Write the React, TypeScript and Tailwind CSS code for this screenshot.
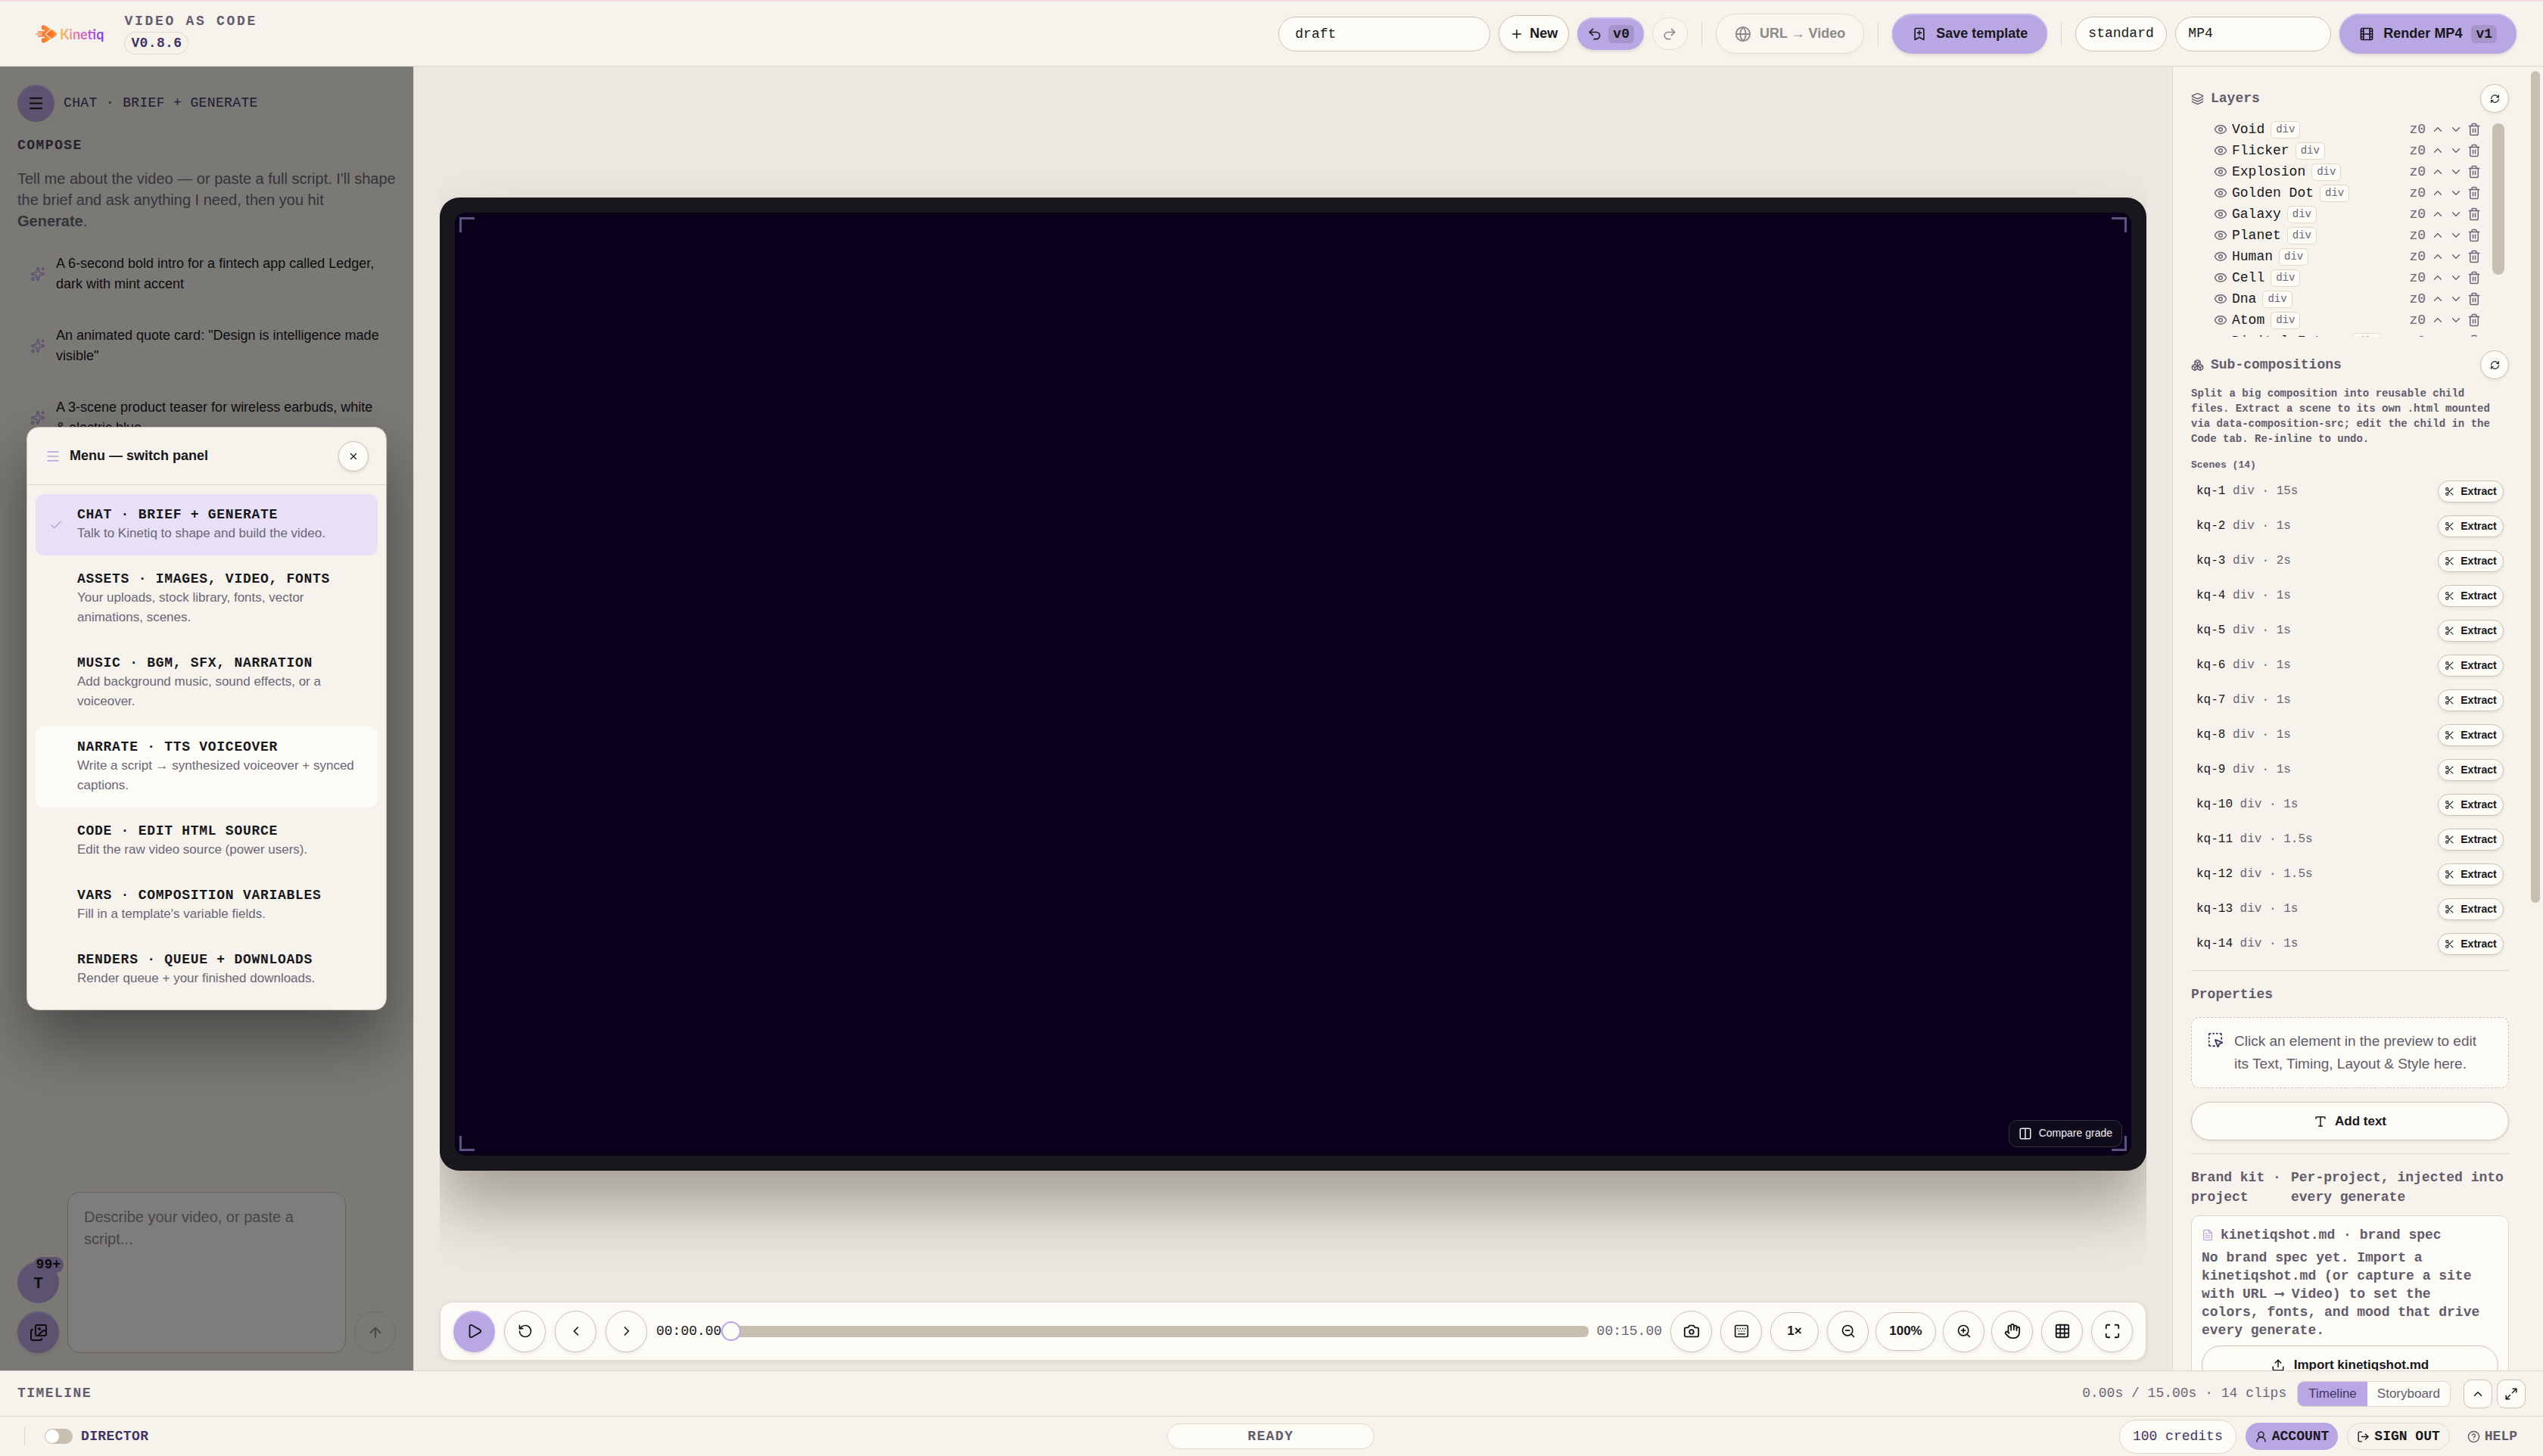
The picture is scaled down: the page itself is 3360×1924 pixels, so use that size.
import { useState } from "react";
import type { ReactNode } from "react";
import {
  ArrowUp,
  BookmarkPlus,
  Boxes,
  Camera,
  Check,
  ChevronDown,
  ChevronLeft,
  ChevronRight,
  ChevronUp,
  CircleQuestionMark,
  Columns2,
  Eye,
  FileText,
  Film,
  Globe,
  Grid3x3,
  Hand,
  Images,
  Layers,
  LogOut,
  Maximize,
  Maximize2,
  Menu,
  Play,
  Plus,
  Redo2,
  RefreshCw,
  RotateCcw,
  Scissors,
  Sparkles,
  SquareDashedMousePointer,
  Trash2,
  Type,
  Undo2,
  Upload,
  UserRound,
  X,
  ZoomIn,
  ZoomOut,
} from "lucide-react";

const MONO = "font-['Liberation_Mono',monospace]";

const IDEAS = [
  "A 6-second bold intro for a fintech app called Ledger, dark with mint accent",
  'An animated quote card: "Design is intelligence made visible"',
  "A 3-scene product teaser for wireless earbuds, white & electric blue",
];

const PANELS = [
  { title: "CHAT · BRIEF + GENERATE", text: "Talk to Kinetiq to shape and build the video." },
  { title: "ASSETS · IMAGES, VIDEO, FONTS", text: "Your uploads, stock library, fonts, vector animations, scenes." },
  { title: "MUSIC · BGM, SFX, NARRATION", text: "Add background music, sound effects, or a voiceover." },
  { title: "NARRATE · TTS VOICEOVER", text: "Write a script → synthesized voiceover + synced captions." },
  { title: "CODE · EDIT HTML SOURCE", text: "Edit the raw video source (power users)." },
  { title: "VARS · COMPOSITION VARIABLES", text: "Fill in a template's variable fields." },
  { title: "RENDERS · QUEUE + DOWNLOADS", text: "Render queue + your finished downloads." },
];

const LAYERS = [
  "Void",
  "Flicker",
  "Explosion",
  "Golden Dot",
  "Galaxy",
  "Planet",
  "Human",
  "Cell",
  "Dna",
  "Atom",
  "Digital Future",
];

const SCENES = ["15s", "1s", "2s", "1s", "1s", "1s", "1s", "1s", "1s", "1s", "1.5s", "1.5s", "1s", "1s"];

function Logo() {
  return (
    <a href="#" className="flex items-center gap-1">
      <svg width="28" height="24" viewBox="0 0 28 24">
        <defs>
          <linearGradient id="mark" x1="0" y1="0" x2="1" y2="0">
            <stop offset="0" stopColor="#ff5a2c" />
            <stop offset="0.55" stopColor="#fb7a2c" />
            <stop offset="1" stopColor="#fba52c" />
          </linearGradient>
        </defs>
        <g fill="url(#mark)">
          <path d="M8 2.5Q8 0 10.500 0.300Q16 2 20 5.500L12.500 12L20 18.500Q16 22 10.500 23.700Q8 24 8 21.500L8 18L12 17L12 15.500L3 15.500L3 14L9 13.800L9 12.800L0 12.600L0 11.400L9 11.200L9 10.200L3 10L3 8.500L12 8.500L12 7L8 6Z" />
          <path d="M14 12L20.500 6.500Q21.500 5.800 22.500 6.500L28 11Q28.600 12 28 13L22.500 17.500Q21.500 18.200 20.500 17.500Z" />
        </g>
      </svg>
      <span className="bg-gradient-to-r from-[#fbb92c] via-[#e05fc0] to-[#7b35f5] bg-clip-text font-[Lato,sans-serif] text-[18px] leading-6 font-bold text-transparent">
        Kinetiq
      </span>
    </a>
  );
}

function KeyboardIcon() {
  return (
    <svg width="20" height="20" viewBox="0 0 24 24" fill="none" stroke="currentColor" strokeWidth="2" strokeLinecap="round">
      <rect x="2" y="3" width="20" height="18" rx="2" />
      <path d="M6 8h.01M10 8h.01M14 8h.01M18 8h.01M8 12h.01M12 12h.01M16 12h.01M7 16.500h10" />
    </svg>
  );
}

function Divider() {
  return (
    <div className="px-[7px]">
      <div className="h-8 w-px bg-[#dcd6ca]" />
    </div>
  );
}

function RoundButton({ label, children, accent }: { label: string; children: ReactNode; accent?: boolean }) {
  return (
    <button
      aria-label={label}
      className={
        accent
          ? "flex size-[55px] shrink-0 items-center justify-center rounded-full bg-[#b9a7e3] shadow-[inset_0_2px_0_#cbbdee,0_2px_4px_rgba(24,23,27,0.12)]"
          : "flex size-[55px] shrink-0 items-center justify-center rounded-full border border-[#cbc3b4] bg-[#fcfbf6] shadow-[0_2px_4px_rgba(24,23,27,0.08)]"
      }
    >
      {children}
    </button>
  );
}

function RefreshButton({ label }: { label: string }) {
  return (
    <button
      aria-label={label}
      className="flex size-[38px] items-center justify-center rounded-full border border-[#cbc3b4] bg-[#fcfbf6] shadow-[0_2px_4px_rgba(24,23,27,0.08)]"
    >
      <RefreshCw size={13} />
    </button>
  );
}

function Header() {
  return (
    <header className="flex h-[88px] shrink-0 items-center justify-between border-t-2 border-b border-t-[#f3dee2] border-b-[#dcd6ca] pr-[35px] pl-[47px]">
      <div className="flex items-center gap-[27px]">
        <Logo />
        <div className={`${MONO} flex flex-col items-start gap-1 text-[18px] font-bold`}>
          <span className="leading-5 tracking-[0.15em] text-[#625b6b]">VIDEO AS CODE</span>
          <span className="rounded-full border border-[#e2d9ca] px-2 leading-7 tracking-[0.02em] text-[#3f3566]">
            V0.8.6
          </span>
        </div>
      </div>

      <div className="flex items-center gap-[11px] text-[18px] font-bold">
        <input
          aria-label="Project name"
          defaultValue="draft"
          className={`${MONO} h-[46px] w-[280px] rounded-full border border-[#cbc3b4] bg-[#fcfbf6] px-[21px] font-normal outline-none`}
        />
        <button className="flex h-[49px] items-center gap-2 rounded-full border border-[#cbc3b4] bg-[#fcfbf6] px-[14px] shadow-[0_2px_4px_rgba(24,23,27,0.08)]">
          <Plus size={18} />
          New
        </button>
        <button
          aria-label="Undo"
          className="flex h-[43px] items-center gap-2 rounded-full bg-[#b9a7e3] px-[13px] shadow-[inset_0_2px_0_#cbbdee,0_2px_4px_rgba(24,23,27,0.12)]"
        >
          <Undo2 size={20} />
          <span className={`${MONO} rounded-md bg-[#a595ca] px-[6px] leading-6`}>v0</span>
        </button>
        <button
          aria-label="Redo"
          className="flex h-[43px] w-[47px] items-center justify-center rounded-full border border-[#e2ddd2] bg-[#f9f6f0] text-[#8b8a89]"
        >
          <Redo2 size={20} />
        </button>
        <Divider />
        <button className="flex h-[53px] items-center gap-[11px] rounded-full border border-[#e2ddd2] bg-[#f9f6f0] px-6 text-[#8b8a89] shadow-[0_2px_4px_rgba(24,23,27,0.04)]">
          <Globe size={22} />
          URL → Video
        </button>
        <Divider />
        <button className="flex h-[53px] items-center gap-3 rounded-full bg-[#b9a7e3] px-[26px] shadow-[inset_0_2px_0_#cbbdee,0_2px_4px_rgba(24,23,27,0.12)]">
          <BookmarkPlus size={20} />
          Save template
        </button>
        <Divider />
        <select
          aria-label="Quality"
          className={`${MONO} h-[46px] w-[121px] appearance-none rounded-full border border-[#cbc3b4] bg-[#fcfbf6] px-4 font-normal outline-none`}
        >
          <option>standard</option>
        </select>
        <select
          aria-label="Format"
          className={`${MONO} h-[46px] w-[206px] appearance-none rounded-full border border-[#cbc3b4] bg-[#fcfbf6] px-4 font-normal outline-none`}
        >
          <option>MP4</option>
        </select>
        <button className="flex h-[53px] items-center gap-3 rounded-full bg-[#b9a7e3] px-[26px] shadow-[inset_0_2px_0_#cbbdee,0_2px_4px_rgba(24,23,27,0.12)]">
          <Film size={20} />
          Render MP4
          <span className={`${MONO} rounded-md bg-[#a595ca] px-[6px] leading-6`}>v1</span>
        </button>
      </div>
    </header>
  );
}

function PanelMenu() {
  const [active, setActive] = useState(0);

  return (
    <div className="absolute inset-0 flex items-center justify-center bg-black/50 px-[35px]">
      <div
        role="dialog"
        aria-label="Menu"
        className="w-full rounded-[16px] border border-[#cbc3b4] bg-[#f6f3ec] shadow-[0_40px_80px_rgba(0,0,0,0.4)]"
      >
        <div className="flex h-[76px] items-center border-b border-[#dcd6ca] pr-[23px] pl-6">
          <Menu size={20} className="text-[#b9a7e3]" />
          <h2 className="ml-3 flex-1 text-[18px] font-bold">Menu — switch panel</h2>
          <button
            aria-label="Close"
            className="flex size-10 items-center justify-center rounded-full border border-[#cbc3b4] bg-[#fcfbf6] shadow-[0_2px_4px_rgba(24,23,27,0.1)]"
          >
            <X size={14} />
          </button>
        </div>
        <div className="flex flex-col gap-1 px-[11px] py-3">
          {PANELS.map((p, i) => (
            <button
              key={p.title}
              onClick={() => setActive(i)}
              className={`flex items-center rounded-[11px] py-4 pr-5 pl-[18px] text-left ${
                i === active ? "bg-[#e8e0f6]" : i === 3 ? "bg-[#fcfbf6]" : ""
              }`}
            >
              <span className="w-[37px] shrink-0">
                {i === active && <Check size={18} className="text-[#b9a7e3]" />}
              </span>
              <span className="flex-1">
                <span className={`${MONO} block text-[18px] leading-[23px] font-bold tracking-[0.04em]`}>
                  {p.title}
                </span>
                <span className="block text-[17px] leading-[26px] text-[#6b6676]">{p.text}</span>
              </span>
            </button>
          ))}
        </div>
      </div>
    </div>
  );
}

function ChatPanel() {
  return (
    <aside className="relative flex w-[547px] shrink-0 flex-col overflow-hidden border-r border-[#dcd6ca]">
      <div className="flex items-center gap-3 px-[23px] pt-6">
        <button
          aria-label="Menu"
          className="flex size-[49px] items-center justify-center rounded-full bg-[#b9a7e3] shadow-[inset_0_2px_0_#cbbdee]"
        >
          <Menu size={23} />
        </button>
        <span className={`${MONO} text-[18px] tracking-[0.02em] text-[#3f3566]`}>CHAT · BRIEF + GENERATE</span>
      </div>
      <h2 className={`${MONO} mt-[19px] px-[23px] text-[18px] leading-6 font-bold tracking-[0.08em] text-[#4b4457]`}>
        COMPOSE
      </h2>
      <p className="mt-[18px] px-[23px] text-[20px] leading-[28px] text-[#6b6676]">
        Tell me about the video — or paste a full script. I'll shape the brief and ask anything I need, then you hit{" "}
        <strong>Generate</strong>.
      </p>
      <div className="mt-[9px] flex flex-col gap-px px-[23px]">
        {IDEAS.map((idea) => (
          <button key={idea} className="flex items-center gap-[14px] py-5 pr-5 pl-[17px] text-left">
            <Sparkles size={20} className="shrink-0 text-[#b9a7e3]" />
            <span className="text-[18px] leading-[27px]">{idea}</span>
          </button>
        ))}
      </div>

      <div className="mt-auto flex items-end gap-[11px] px-[23px] pb-[23px]">
        <div className="flex flex-col gap-[11px]">
          <button
            aria-label="Assets, 99+"
            className={`${MONO} relative flex size-[55px] items-center justify-center rounded-full bg-[#b9a7e3] text-[20px] font-bold shadow-[inset_0_2px_0_#cbbdee]`}
          >
            <span className="font-['Liberation_Sans',sans-serif]">T</span>
            <span className="absolute -top-[6px] -right-[6px] rounded-full bg-[#b9a7e3] px-1 text-[18px] leading-[21px]">
              99+
            </span>
          </button>
          <RoundButton label="Add images" accent>
            <Images size={24} />
          </RoundButton>
        </div>
        <textarea
          aria-label="Describe your video"
          placeholder="Describe your video, or paste a script..."
          className="h-[213px] min-w-0 flex-1 resize-none rounded-[17px] border border-[#cbc3b4] bg-[#fcfbf6] px-[21px] py-[18px] text-[20px] leading-[29px] outline-none placeholder:text-[#8f8b93]"
        />
        <button
          aria-label="Send"
          className="flex size-[55px] items-center justify-center rounded-full border border-[#dcd6ca] text-[#8f8b93]"
        >
          <ArrowUp size={22} />
        </button>
      </div>
      <PanelMenu />
    </aside>
  );
}

function Stage() {
  return (
    <main className="flex min-w-0 flex-1 flex-col bg-[#ece7e0] px-[34px] pb-[13px]">
      <div className="flex min-h-0 flex-1 items-center overflow-hidden pt-6">
        <div className="w-full rounded-[26px] bg-[#18171b] p-5 shadow-[0_48px_80px_rgba(60,56,48,0.4)]">
          <div className="relative aspect-video rounded-[14px] bg-[#0a001c]">
            <div className="absolute top-[6px] left-[6px] size-5 border-t-[3px] border-l-[3px] border-[#5f5283]" />
            <div className="absolute top-[6px] right-[6px] size-5 border-t-[3px] border-r-[3px] border-[#5f5283]" />
            <div className="absolute bottom-[6px] left-[6px] size-5 border-b-[3px] border-l-[3px] border-[#5f5283]" />
            <div className="absolute right-[6px] bottom-[6px] size-5 border-r-[3px] border-b-[3px] border-[#5f5283]" />
            <button className="absolute right-[12px] bottom-[11px] flex h-9 items-center gap-[9px] rounded-[11px] border border-[#35313d] bg-[#100b1b] px-3 text-[14px] text-[#f1eff4]">
              <Columns2 size={18} />
              Compare grade
            </button>
          </div>
        </div>
      </div>

      <div className="mt-6 flex h-[78px] items-center gap-[11px] rounded-[17px] border border-[#dfd8ca] bg-[#fcfbf6] px-[17px] shadow-[0_2px_6px_rgba(24,23,27,0.08)]">
        <div className="flex min-w-0 flex-1 items-center gap-3">
          <RoundButton label="Play" accent>
            <Play size={22} />
          </RoundButton>
          <RoundButton label="Restart">
            <RotateCcw size={20} />
          </RoundButton>
          <RoundButton label="Previous frame">
            <ChevronLeft size={20} />
          </RoundButton>
          <RoundButton label="Next frame">
            <ChevronRight size={20} />
          </RoundButton>
          <div className="flex min-w-0 flex-1 items-center">
            <span className={`${MONO} text-[18px]`}>00:00.00</span>
            <input
              type="range"
              aria-label="Playhead"
              defaultValue={0}
              className="h-[15px] min-w-0 flex-1 appearance-none rounded-[6px] bg-[#c8bfb1] [&::-webkit-slider-thumb]:size-[26px] [&::-webkit-slider-thumb]:appearance-none [&::-webkit-slider-thumb]:rounded-full [&::-webkit-slider-thumb]:border-2 [&::-webkit-slider-thumb]:border-[#b9a7e3] [&::-webkit-slider-thumb]:bg-[#fcfbf6]"
            />
          </div>
        </div>
        <span className={`${MONO} text-[18px] text-[#6b6676]`}>00:15.00</span>
        <RoundButton label="Snapshot">
          <Camera size={22} />
        </RoundButton>
        <RoundButton label="Shortcuts">
          <KeyboardIcon />
        </RoundButton>
        <button className="h-[51px] w-16 rounded-full border border-[#cbc3b4] text-[17px] font-bold shadow-[0_2px_4px_rgba(24,23,27,0.06)]">
          1×
        </button>
        <div className="flex items-center gap-[9px]">
          <RoundButton label="Zoom out">
            <ZoomOut size={20} />
          </RoundButton>
          <button className="h-[51px] w-20 rounded-full border border-[#cbc3b4] text-[17px] font-bold shadow-[0_2px_4px_rgba(24,23,27,0.06)]">
            100%
          </button>
          <RoundButton label="Zoom in">
            <ZoomIn size={20} />
          </RoundButton>
          <RoundButton label="Pan">
            <Hand size={22} />
          </RoundButton>
        </div>
        <RoundButton label="Grid">
          <Grid3x3 size={22} />
        </RoundButton>
        <RoundButton label="Fullscreen">
          <Maximize size={22} />
        </RoundButton>
      </div>
    </main>
  );
}

function LayerRow({ name }: { name: string }) {
  return (
    <li className="flex h-7 items-center text-[#6b6676]">
      <button aria-label={`Hide ${name}`}>
        <Eye size={18} />
      </button>
      <span className="ml-[6px] text-[18px] text-[#18171b]">{name}</span>
      <span className="ml-2 rounded-[6px] border border-[#e2d9ca] bg-[#fcfbf6] px-[6px] text-[14px] leading-[21px]">
        div
      </span>
      <span className="ml-auto text-[18px]">z0</span>
      <button aria-label={`Raise ${name}`} className="ml-[7px]">
        <ChevronUp size={18} />
      </button>
      <button aria-label={`Lower ${name}`} className="ml-[6px]">
        <ChevronDown size={18} />
      </button>
      <button aria-label={`Delete ${name}`} className="ml-[6px]">
        <Trash2 size={18} />
      </button>
    </li>
  );
}

function Inspector() {
  return (
    <aside className="flex w-[490px] shrink-0 overflow-hidden border-l border-[#dcd6ca] pr-1 pl-6">
      <div className={`${MONO} flex w-full min-w-0 flex-col text-[18px]`}>
        <div className="mt-[23px] flex items-center text-[#625b6b]">
          <Layers size={17} />
          <h2 className="ml-[9px] flex-1 font-bold">Layers</h2>
          <div className="text-[#18171b]">
            <RefreshButton label="Refresh layers" />
          </div>
        </div>
        <div className="mt-2 flex h-[288px] shrink-0 overflow-hidden pr-[6px] pl-[30px]">
          <ul className="flex-1">
            {LAYERS.map((name) => (
              <LayerRow key={name} name={name} />
            ))}
          </ul>
          <div className="mt-[6px] ml-[15px] h-[200px] w-4 rounded-full bg-[#c8bfb1]" />
        </div>

        <div className="mt-[18px] flex items-center text-[#625b6b]">
          <Boxes size={17} />
          <h2 className="ml-[9px] flex-1 font-bold">Sub-compositions</h2>
          <div className="text-[#18171b]">
            <RefreshButton label="Refresh sub-compositions" />
          </div>
        </div>
        <p className="mt-[9px] text-[14px] leading-5 font-bold text-[#625b6b]">
          Split a big composition into reusable child files. Extract a scene to its own .html mounted via
          data-composition-src; edit the child in the Code tab. Re-inline to undo.
        </p>
        <h3 className="mt-[15px] text-[13px] leading-5 font-bold text-[#625b6b]">Scenes (14)</h3>
        <ul className="pt-px pr-[7px] pl-[7px] text-[16px]">
          {SCENES.map((time, i) => (
            <li key={i} className="flex h-[46px] items-center justify-between">
              <span className="text-[#6b6676]">
                <span className="text-[#18171b]">kq-{i + 1}</span> div · {time}
              </span>
              <button className="flex h-[29px] w-[87px] items-center justify-center gap-2 rounded-full border border-[#cbc3b4] bg-[#fcfbf6] font-['Liberation_Sans',sans-serif] text-[14px] font-bold shadow-[0_2px_4px_rgba(24,23,27,0.08)]">
                <Scissors size={13} />
                Extract
              </button>
            </li>
          ))}
        </ul>

        <div className="mt-3 border-t border-[#dfd8ca] pt-[18px]">
          <h2 className="leading-[26px] font-bold text-[#625b6b]">Properties</h2>
        </div>
        <div className="mt-[17px] flex items-start gap-[14px] rounded-[11px] border border-dashed border-[#cbc3b4] bg-[#fcfbf6] px-5 py-4 font-['Liberation_Sans',sans-serif] text-[19px] leading-[30px] text-[#625b6b]">
          <SquareDashedMousePointer size={22} className="mt-[2px] shrink-0 text-[#3f3566]" />
          <p>Click an element in the preview to edit its Text, Timing, Layout &amp; Style here.</p>
        </div>
        <button className="mt-[18px] flex h-[51px] shrink-0 items-center justify-center gap-[10px] rounded-full border border-[#cbc3b4] bg-[#fcfbf6] font-['Liberation_Sans',sans-serif] text-[17px] font-bold shadow-[0_2px_4px_rgba(24,23,27,0.08)]">
          <Type size={18} />
          Add text
        </button>

        <div className="mt-[17px] flex gap-[10px] border-t border-[#dfd8ca] pt-[18px] leading-[26px] font-bold text-[#625b6b]">
          <h2 className="w-[122px] shrink-0">Brand kit · project</h2>
          <p>Per-project, injected into every generate</p>
        </div>
        <section className="mt-[11px] rounded-[11px] border border-[#dfd8ca] bg-[#fcfbf6] p-[13px] font-bold text-[#625b6b]">
          <h3 className="flex items-center gap-[9px] leading-6">
            <FileText size={16} className="text-[#b9a7e3]" />
            kinetiqshot.md · brand spec
          </h3>
          <p className="mt-[6px] pr-4 leading-6">
            No brand spec yet. Import a kinetiqshot.md (or capture a site with URL ⟶ Video) to set the colors, fonts,
            and mood that drive every generate.
          </p>
          <button className="mt-2 flex h-[51px] w-full items-center justify-center gap-3 rounded-full border border-[#cbc3b4] bg-[#fcfbf6] font-['Liberation_Sans',sans-serif] text-[17px] text-[#18171b]">
            <Upload size={18} />
            Import kinetiqshot.md
          </button>
        </section>
      </div>
      <div className="mt-[6px] ml-[29px] h-[1099px] w-3 shrink-0 rounded-full bg-[#c8bfb1]" />
    </aside>
  );
}

function TimelineBar() {
  const [view, setView] = useState("Timeline");

  return (
    <section className="flex h-[60px] shrink-0 items-center border-t border-[#dcd6ca] pr-[23px] pl-[23px]">
      <h2 className={`${MONO} flex-1 text-[18px] font-bold tracking-[0.08em] text-[#625b6b]`}>TIMELINE</h2>
      <span className={`${MONO} text-[18px] text-[#6b6676]`}>0.00s / 15.00s · 14 clips</span>
      <div className="ml-[14px] flex overflow-hidden rounded-[9px] border border-[#dfd8ca] bg-[#fcfbf6] text-[17px] leading-8">
        {["Timeline", "Storyboard"].map((name) => (
          <button
            key={name}
            onClick={() => setView(name)}
            className={name === view ? "bg-[#b9a7e3] px-[14px] text-[#3f3566]" : "px-[13px] text-[#625b6b]"}
          >
            {name}
          </button>
        ))}
      </div>
      <button
        aria-label="Expand timeline"
        className="ml-[17px] flex size-[38px] items-center justify-center rounded-[11px] border border-[#cbc3b4] bg-[#fcfbf6]"
      >
        <ChevronUp size={18} />
      </button>
      <button
        aria-label="Full size timeline"
        className="ml-[6px] flex size-[38px] items-center justify-center rounded-[11px] border border-[#cbc3b4] bg-[#fcfbf6]"
      >
        <Maximize2 size={18} />
      </button>
    </section>
  );
}

function Footer() {
  return (
    <footer
      className={`${MONO} grid h-[53px] shrink-0 grid-cols-[1fr_auto_1fr] items-center border-t border-[#dcd6ca] pr-[34px] pl-8 text-[18px] font-bold`}
    >
      <div className="flex items-center">
        <div className="mr-[26px] h-6 w-px bg-[#dcd6ca]" />
        <label className="flex items-center gap-[11px] tracking-[0.02em] text-[#3f3566]">
          <input
            type="checkbox"
            role="switch"
            className="h-5 w-[37px] appearance-none rounded-full bg-[#c8bfb1] p-px before:block before:size-[18px] before:rounded-full before:bg-white"
          />
          DIRECTOR
        </label>
      </div>
      <div className="w-[274px] rounded-full border border-[#dfd8ca] bg-[#fcfbf6] text-center leading-8 tracking-[0.08em] text-[#625b6b]">
        READY
      </div>
      <div className="flex items-center justify-end gap-3">
        <button className="h-[45px] rounded-full border border-[#dfd8ca] bg-[#fcfbf6] px-[17px] font-normal text-[#3f3566]">
          100 credits
        </button>
        <button className="flex h-9 items-center gap-[6px] rounded-full bg-[#b9a7e3] px-3">
          <UserRound size={17} />
          ACCOUNT
        </button>
        <button className="flex h-9 items-center gap-[6px] rounded-full border border-[#e2ddd2] px-3">
          <LogOut size={17} />
          SIGN OUT
        </button>
        <a href="#" className="ml-[11px] flex items-center gap-[6px] text-[#625b6b]">
          <CircleQuestionMark size={17} />
          HELP
        </a>
      </div>
    </footer>
  );
}

export default function App() {
  return (
    <div className="flex h-screen flex-col overflow-hidden bg-[#f6f3ec] font-['Liberation_Sans',Arial,sans-serif] text-[#18171b]">
      <Header />
      <div className="flex min-h-0 flex-1">
        <ChatPanel />
        <Stage />
        <Inspector />
      </div>
      <TimelineBar />
      <Footer />
    </div>
  );
}
